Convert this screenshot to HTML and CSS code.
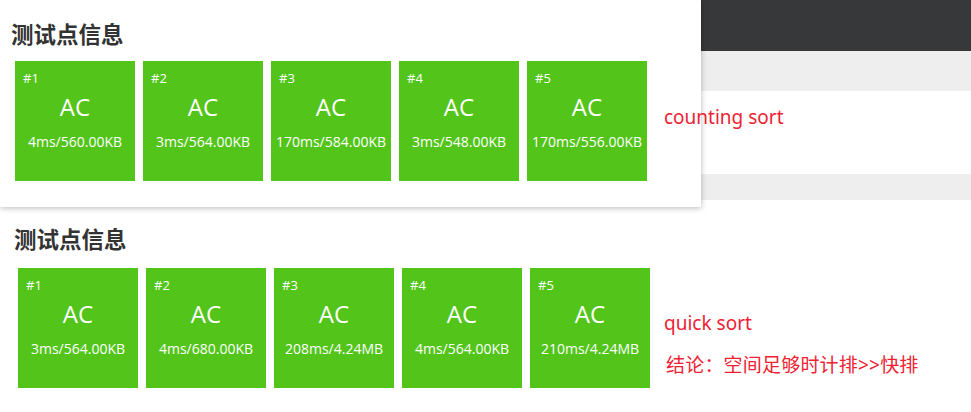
FILE: index.html
```html
<!DOCTYPE html>
<html lang="zh-CN">
<head>
<meta charset="utf-8">
<title>测试点信息</title>
<link rel="stylesheet" href="styles.css">
</head>
<body>
<div class="page">
  <div class="top">
    <section class="panel">
      <h2 class="title">测试点信息</h2>
      <div class="cases">
        <div class="case"><span class="num">#1</span><span class="res">AC</span><span class="info">4ms/560.00KB</span></div>
        <div class="case"><span class="num">#2</span><span class="res">AC</span><span class="info">3ms/564.00KB</span></div>
        <div class="case"><span class="num">#3</span><span class="res">AC</span><span class="info">170ms/584.00KB</span></div>
        <div class="case"><span class="num">#4</span><span class="res">AC</span><span class="info">3ms/548.00KB</span></div>
        <div class="case"><span class="num">#5</span><span class="res">AC</span><span class="info">170ms/556.00KB</span></div>
      </div>
    </section>
    <div class="backdrop">
      <div class="bar-dark"></div>
      <div class="bar-gray"></div>
      <div class="bar-white"></div>
      <div class="bar-gray2"></div>
    </div>
    <p class="note note-counting">counting sort</p>
  </div>
  <section class="lower">
    <h2 class="title">测试点信息</h2>
    <div class="cases">
      <div class="case"><span class="num">#1</span><span class="res">AC</span><span class="info">3ms/564.00KB</span></div>
      <div class="case"><span class="num">#2</span><span class="res">AC</span><span class="info">4ms/680.00KB</span></div>
      <div class="case"><span class="num">#3</span><span class="res">AC</span><span class="info">208ms/4.24MB</span></div>
      <div class="case"><span class="num">#4</span><span class="res">AC</span><span class="info">4ms/564.00KB</span></div>
      <div class="case"><span class="num">#5</span><span class="res">AC</span><span class="info">210ms/4.24MB</span></div>
    </div>
    <div class="notes">
      <p class="note">quick sort</p>
      <p class="note">结论：空间足够时计排&gt;&gt;快排</p>
    </div>
  </section>
</div>
</body>
</html>
```
FILE: styles.css
```css
* { box-sizing: border-box; }
html, body { margin: 0; padding: 0; }
body {
  width: 971px;
  height: 412px;
  overflow: hidden;
  background: #fff;
  font-family: "Open Sans", "Noto Sans CJK SC", sans-serif;
}
.page { width: 971px; }
.top {
  position: relative;
  display: flex;
  height: 208px;
}
.panel {
  position: relative;
  z-index: 1;
  width: 701px;
  height: 207px;
  background: #fff;
  box-shadow: 0 1px 6px rgba(0, 0, 0, 0.28);
  padding: 19px 0 0 11px;
}
.backdrop {
  flex: 1;
  display: flex;
  flex-direction: column;
}
.bar-dark { height: 51px; background: #37383a; }
.bar-gray { height: 40px; background: #eeeeee; }
.bar-white { height: 83px; background: #fff; }
.bar-gray2 { height: 26px; background: #eeeeee; }
.title {
  margin: 0;
  font-family: "Noto Sans CJK SC", sans-serif;
  font-size: 22.5px;
  font-weight: 700;
  line-height: 28px;
  color: #333;
}
.cases {
  display: flex;
  gap: 8px;
  margin-top: 14px;
  padding-left: 4px;
}
.case {
  width: 120px;
  height: 120px;
  background: #52c41a;
  color: #fff;
  display: flex;
  flex-direction: column;
  padding: 9px 0 0 8px;
}
.num {
  font-size: 13px;
  line-height: 16px;
}
.res {
  margin: 5px 0 0 -8px;
  font-size: 24px;
  line-height: 32px;
  text-align: center;
}
.info {
  margin: 10px 0 0 -8px;
  font-size: 14px;
  line-height: 18px;
  text-align: center;
  white-space: nowrap;
}
.note {
  margin: 0;
  color: #ee2233;
  font-family: "Noto Sans", "Noto Sans CJK SC", sans-serif;
  font-size: 19px;
  line-height: 24px;
}
.note-counting {
  position: absolute;
  z-index: 2;
  left: 664px;
  top: 105px;
}
.lower {
  position: relative;
  padding: 16px 0 0 14px;
}
.lower .cases { margin-top: 16px; }
.notes {
  position: absolute;
  left: 664px;
  top: 103px;
  display: flex;
  flex-direction: column;
  gap: 18px;
}
.notes .note:last-child { margin-left: 2px; letter-spacing: 0.2px; }
```
